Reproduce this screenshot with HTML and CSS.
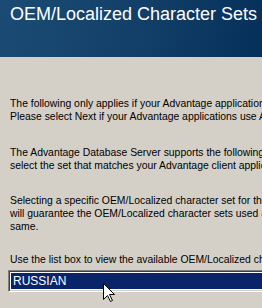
FILE: index.html
```html
<!doctype html>
<html lang="en">
<head>
    <meta charset="utf-8">
    <title>OEM/Localized Character Sets</title>
    <link rel="stylesheet" href="styles.css">
</head>
<body>

<!-- Wizard page header -->
<header class="wizard-header">
    <h1 class="wizard-title">OEM/Localized Character Sets</h1>
</header>

<!-- Wizard page body -->
<main class="wizard-body">
    <p class="wizard-text wizard-text-intro">The following only applies if your Advantage applications use<br>Please select Next if your Advantage applications use ANSI</p>
    <p class="wizard-text">The Advantage Database Server supports the following<br>select the set that matches your Advantage client application</p>
    <p class="wizard-text wizard-text-note">Selecting a specific OEM/Localized character set for the server<br>will guarantee the OEM/Localized character sets used are the<br>same.</p>
    <p class="wizard-text wizard-text-last">Use the list box to view the available OEM/Localized character sets</p>

    <!-- List box with the selected character set -->
    <div class="list-box" role="listbox">
        <div class="list-item list-item-selected" role="option" aria-selected="true">RUSSIAN</div>
    </div>
</main>

<!-- Mouse pointer over the list box -->
<svg class="pointer" width="13" height="21" viewBox="0 0 13 21" aria-hidden="true">
    <path d="M0.5 0.5 L0.5 16.5 L4.5 12.5 L7.5 18.5 L9.5 17.5 L6.5 11.5 L11.5 11.5 Z" fill="#fff" stroke="#000" stroke-width="1" stroke-linejoin="miter"/>
</svg>

</body>
</html>
```

FILE: styles.css
```css
*, *::before, *::after {
    box-sizing: border-box;
}

:root {
    --win-face: #d4d0c8;
    --win-shadow: #808080;
    --win-dark: #404040;
    --win-highlight: #0a246a;
}

body {
    margin: 0;
    width: 262px;
    height: 308px;
    overflow: hidden;
    position: relative;
    background: var(--win-face);
    font-family: "Liberation Sans", Arial, sans-serif;
    color: #000;
}

/* Header band */
.wizard-header {
    height: 57px;
    padding: 3px 0 0 10px;
    background: linear-gradient(100deg, #1b4b74 0%, #123f68 55%, #04305a 100%);
}

.wizard-title {
    margin: 0;
    font-size: 18px;
    font-weight: normal;
    line-height: 22px;
    color: #fff;
    white-space: nowrap;
}

/* Text area */
.wizard-body {
    padding: 40px 0 0 10px;
}

.wizard-text {
    margin: 0 0 22px;
    font-size: 10.4px;
    line-height: 13px;
    white-space: nowrap;
}

.wizard-text-intro {
    margin-bottom: 23px;
}

.wizard-text-note {
    margin-bottom: 20px;
}

.wizard-text-last {
    margin-bottom: 4px;
}

/* Sunken list box */
.list-box {
    width: 260px;
    margin-left: -2px;
    padding: 1px;
    background: #fff;
    border: 1px solid;
    border-color: var(--win-shadow) #fff #fff var(--win-shadow);
    box-shadow: inset 1px 1px 0 var(--win-dark), inset -1px -1px 0 var(--win-face);
}

.list-box .list-item {
    margin: 1px;
    height: 16px;
    padding-left: 2px;
    font-size: 12px;
    line-height: 16px;
}

.list-item-selected {
    background: var(--win-highlight);
    color: #fff;
}

/* Mouse pointer */
.pointer {
    position: absolute;
    left: 103px;
    top: 283px;
}
```
